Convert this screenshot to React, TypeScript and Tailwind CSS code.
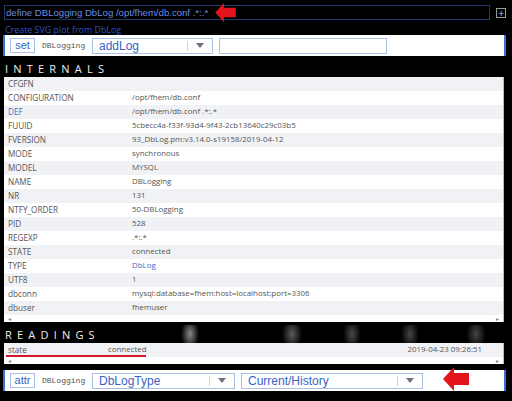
import React from 'react';

const internals: [string, string, string?][] = [
  ['CFGFN', ''],
  ['CONFIGURATION', '/opt/fhem/db.conf'],
  ['DEF', '/opt/fhem/db.conf .*:.*', 'key'],
  ['FUUID', '5cbecc4a-f33f-93d4-9f43-2cb13640c29c03b5'],
  ['FVERSION', '93_DbLog.pm:v3.14.0-s19158/2019-04-12'],
  ['MODE', 'synchronous'],
  ['MODEL', 'MYSQL'],
  ['NAME', 'DBLogging'],
  ['NR', '131'],
  ['NTFY_ORDER', '50-DBLogging'],
  ['PID', '528'],
  ['REGEXP', '.*:.*'],
  ['STATE', 'connected'],
  ['TYPE', 'DbLog', 'val'],
  ['UTF8', '1'],
  ['dbconn', 'mysql:database=fhem:host=localhost:port=3306'],
  ['dbuser', 'fhemuser'],
];

const RedArrow = ({ className }: { className: string }) => (
  <svg viewBox="0 0 26 24" className={className}>
    <polygon points="0,12 11,0 11,6 26,6 26,18 11,18 11,24" fill="#e3141c" />
  </svg>
);

const Caret = () => (
  <svg viewBox="0 0 8 5" className="w-[8px] h-[5px]">
    <polygon points="0,0 8,0 4,5" fill="#6b7280" />
  </svg>
);

const Select = ({ label, width }: { label: string; width: string }) => (
  <div className={`${width} h-[16px] border border-[#a9c1e3] bg-white flex items-center`}>
    <span className="flex-1 pl-[6px] text-[12px] leading-none text-[#3a63c4] font-['Liberation_Sans',sans-serif]">{label}</span>
    <div className="w-px h-[10px] bg-[#d0d5dd]" />
    <div className="w-[24px] flex items-center justify-center">
      <Caret />
    </div>
  </div>
);

const Btn = ({ label }: { label: string }) => (
  <div className="w-[25px] h-[15px] border border-[#a9c1e3] flex items-center justify-center text-[11px] leading-none text-[#3a63c4] font-['Liberation_Sans',sans-serif]">
    {label}
  </div>
);

const ScrollRow = () => (
  <div className="h-[7px] flex items-center justify-between px-[4px] text-[6px] leading-none text-[#888]">
    <span>◂</span>
    <span>▸</span>
  </div>
);

const Heading = ({ text }: { text: string }) => (
  <div className="h-[18px] pl-[5px] flex items-center text-[11px] leading-none text-[#eeeeee] tracking-[5.2px] font-['Open_Sans',sans-serif]">
    {text}
  </div>
);

export default function App() {
  return (
    <div className="w-[512px] h-[401px] bg-black overflow-hidden font-['Open_Sans',sans-serif]">
      {/* define line */}
      <div className="flex items-center pt-[5px] pl-[4px]">
        <div className="relative w-[486px] h-[15px] border border-[#233b6c] flex items-center pl-[1px]">
          <span className="text-[9.6px] leading-none text-[#6a8ce0] font-['Liberation_Sans',sans-serif]">
            define DBLogging DbLog /opt/fhem/db.conf .*:.*
          </span>
          <RedArrow className="absolute left-[208px] top-[-3px] w-[25px] h-[19px]" />
        </div>
        <div className="ml-[6px] w-[10px] h-[10px] border border-[#999] flex items-center justify-center text-[10px] leading-none text-[#ccc]">
          +
        </div>
      </div>

      <div className="pl-[5px] mt-[5px] h-[10px] text-[8.9px] leading-[10px] text-[#2f52c6]">Create SVG plot from DbLog</div>

      {/* set bar */}
      <div className="ml-[3px] w-[503px] h-[21px] bg-white border-l-2 border-r-2 border-[#3d6fd6] flex items-center pl-[5px] gap-[7px]">
        <Btn label="set" />
        <span className="w-[43px] text-[8px] text-[#555] font-['Liberation_Mono',monospace]">DBLogging</span>
        <Select label="addLog" width="w-[121px]" />
        <div className="ml-[-1px] w-[168px] h-[16px] border border-[#a9c1e3]" />
      </div>

      <div className="mt-[3px]">
        <Heading text="INTERNALS" />
      </div>

      <div className="ml-[4px] w-[500px] bg-white border-r border-[#bbb] text-[#555]">
        {internals.map(([k, v, link], i) => (
          <div key={k} className={`h-[14px] flex items-center ${i % 2 === 0 ? 'bg-[#f1f2f6]' : 'bg-white'}`}>
            <span className={`w-[128px] pl-[4px] text-[8.2px] ${link === 'key' ? 'text-[#3d6cc8]' : ''}`}>{k}</span>
            <span className={`text-[7.9px] ${link === 'val' ? 'text-[#3d6cc8]' : ''}`}>{v}</span>
          </div>
        ))}
        <ScrollRow />
      </div>

      <div className="mt-[3px] bg-[radial-gradient(ellipse_9px_16px_at_190px_50%,#8a8a8a,transparent),radial-gradient(ellipse_10px_16px_at_292px_50%,#5c5c5c,transparent),radial-gradient(ellipse_9px_16px_at_352px_50%,#4a4a4a,transparent),radial-gradient(ellipse_9px_16px_at_410px_50%,#444,transparent),radial-gradient(ellipse_10px_16px_at_476px_50%,#444,transparent)]">
        <Heading text="READINGS" />
      </div>

      <div className="ml-[4px] w-[500px] bg-white border-r border-[#bbb] text-[7.9px] text-[#555]">
        <div className="h-[14px] flex items-center bg-[#f1f2f6] relative">
          <span className="w-[104px] pl-[4px] text-[8.2px]">state</span>
          <span className="flex-1">connected</span>
          <span className="pr-[21px]">2019-04-23 09:26:51</span>
          <div className="absolute left-[2px] top-[12px] w-[140px] h-[2px] bg-[#d4192a]" />
        </div>
        <ScrollRow />
      </div>

      {/* attr bar */}
      <div className="relative mt-[6px] ml-[3px] w-[503px] h-[21px] bg-white border-l-2 border-r-2 border-[#3d6fd6] flex items-center pl-[5px] gap-[7px]">
        <Btn label="attr" />
        <span className="w-[43px] text-[8px] text-[#555] font-['Liberation_Mono',monospace]">DBLogging</span>
        <Select label="DbLogType" width="w-[143px]" />
        <div className="ml-[-1px]">
          <Select label="Current/History" width="w-[182px]" />
        </div>
        <RedArrow className="absolute left-[438px] top-[-3px] w-[26px] h-[24px]" />
      </div>
    </div>
  );
}
